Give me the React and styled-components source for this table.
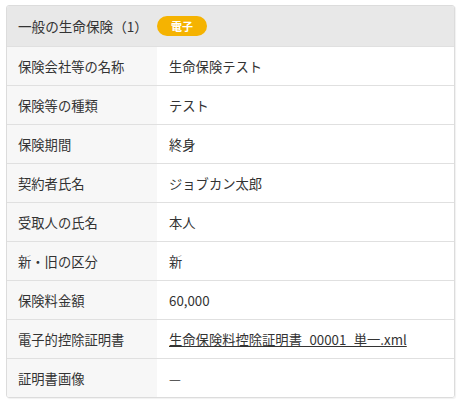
import React from 'react'
import styled, { createGlobalStyle } from 'styled-components'

const rows = [
    { label: '保険会社等の名称', value: '生命保険テスト' },
    { label: '保険等の種類', value: 'テスト' },
    { label: '保険期間', value: '終身' },
    { label: '契約者氏名', value: 'ジョブカン太郎' },
    { label: '受取人の氏名', value: '本人' },
    { label: '新・旧の区分', value: '新' },
    { label: '保険料金額', value: '60,000' },
    { label: '電子的控除証明書', value: '生命保険料控除証明書_00001_単一.xml', link: true },
    { label: '証明書画像', value: '—' },
]

export default function App() {
    return (
        <>
            <GlobalStyle />
            <Card>
                <Header>
                    <Title>一般の生命保険（1）</Title>
                    <Badge>電子</Badge>
                </Header>
                {rows.map(row => (
                    <Row key={row.label}>
                        <Label>{row.label}</Label>
                        <Value>
                            {row.link ? <FileLink href="#">{row.value}</FileLink> : row.value}
                        </Value>
                    </Row>
                ))}
            </Card>
        </>
    )
}

const GlobalStyle = createGlobalStyle`
    body {
        margin: 0;
        padding: 5px 6px;
        background: #fff;
        font-family: "Noto Sans CJK JP", "Noto Sans", sans-serif;
        color: #333;
    }
`

const Card = styled.div`
    width: 447px;
    border: 1px solid #dcdcdc;
    border-radius: 3px;
    box-shadow: 1px 1px 1px rgba(0, 0, 0, 0.06);
    overflow: hidden;
`

const Header = styled.div`
    display: flex;
    align-items: center;
    gap: 9px;
    height: 40px;
    padding: 0 11px;
    background: #e8e8e8;
`

const Title = styled.div`
    font-size: 13.6px;
    color: #333;
`

const Badge = styled.span`
    display: inline-flex;
    align-items: center;
    justify-content: center;
    width: 50px;
    height: 20px;
    border-radius: 10px;
    background: #f5b301;
    color: #fff;
    font-size: 11px;
    font-weight: 700;
`

const Row = styled.div`
    display: grid;
    grid-template-columns: 150px 1fr;
    height: 38px;
    border-top: 1px solid #e0e0e0;
    font-size: 13.3px;
`

const Label = styled.div`
    display: flex;
    align-items: center;
    padding-left: 11px;
    background: #f7f7f7;
    color: #333;
`

const Value = styled.div`
    display: flex;
    align-items: center;
    padding-left: 12px;
    background: #fff;
    color: #333;
`

const FileLink = styled.a`
    color: #333;
    text-decoration: underline;
`
